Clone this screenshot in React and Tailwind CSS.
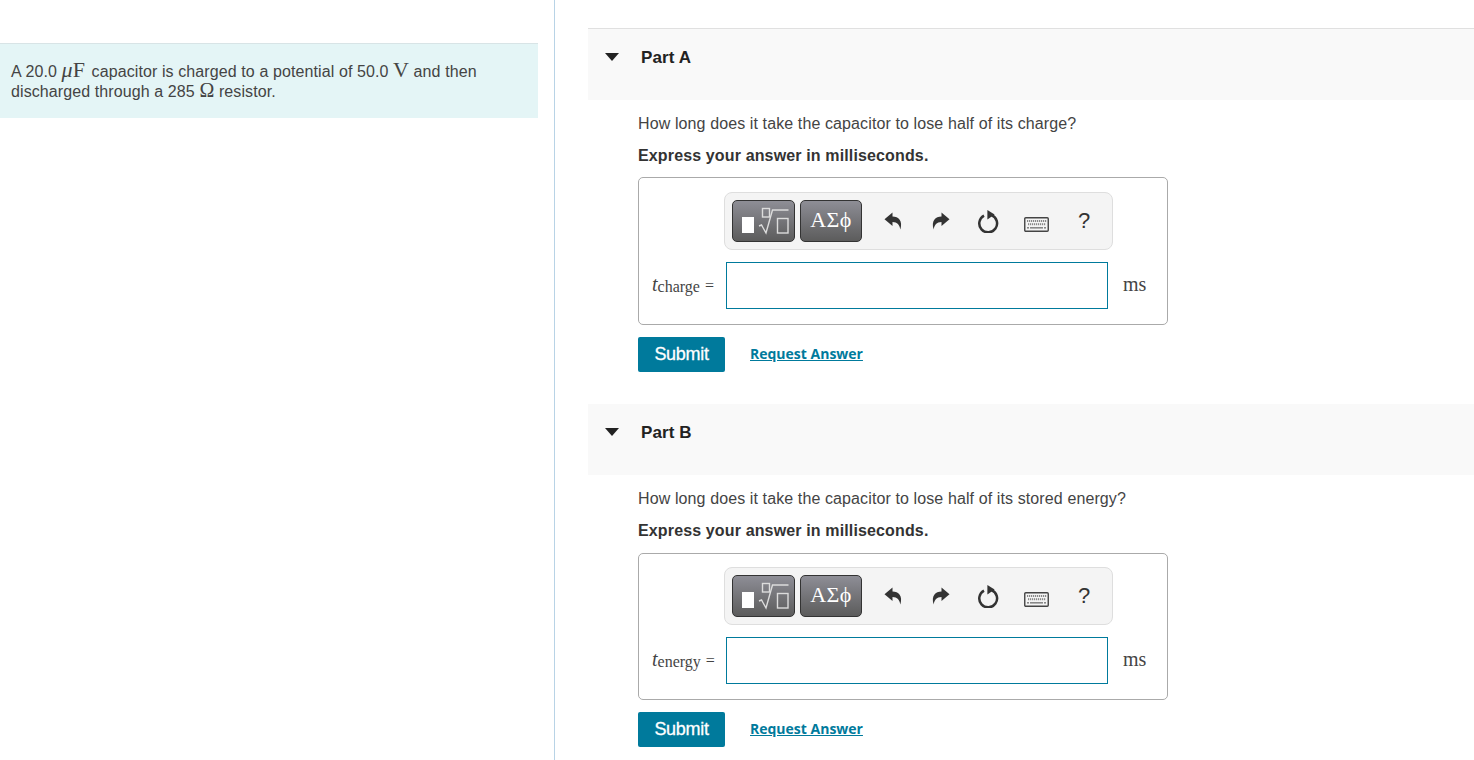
function TemplateIcon() {
  return (
    <svg width="61" height="40" viewBox="0 0 61 40" className="block shrink-0">
      <rect x="9" y="16" width="12" height="16" fill="#fff" />
      <g fill="none" stroke="#dcdcdc" strokeWidth="1.4">
        <rect x="29.5" y="7.5" width="7" height="8.5" />
        <path d="M26 25l2.5-1 4.5 8 6.5-23h16" />
        <rect x="44.5" y="17.5" width="10.5" height="14.5" />
      </g>
    </svg>
  );
}

function Undo() {
  return (
    <svg width="19" height="18" viewBox="0 0 19 18" className="block">
      <path d="M0.5 7.2L8.5 0.4V4.6C14.5 4.6 19 8.6 16.4 17.6C15.6 13 13.4 10 8.5 10V14Z" fill="#333" />
    </svg>
  );
}

function Redo() {
  return (
    <svg width="19" height="18" viewBox="0 0 19 18" className="block">
      <path d="M18.5 7.2L10.5 0.4V4.6C4.5 4.6 0 8.6 2.6 17.6C3.4 13 5.6 10 10.5 10V14Z" fill="#333" />
    </svg>
  );
}

function Reset() {
  return (
    <svg width="22" height="23" viewBox="0 0 22 23" className="block">
      <path d="M14.5 5.2A8.9 8.9 0 1 1 7 5.6" fill="none" stroke="#333" strokeWidth="2.5" />
      <path d="M10.4 0L17.6 4.6L10.4 9.4Z" fill="#333" />
    </svg>
  );
}

function Keyboard() {
  return (
    <svg width="25" height="15" viewBox="0 0 25 15" className="block">
      <rect x="0.75" y="0.75" width="23.5" height="13.5" rx="1" fill="#f4f4f4" stroke="#444" strokeWidth="1.4" />
      <g fill="#888">
        {[3, 5, 7, 9, 11, 13, 15, 17, 19, 21].map((x) => (
          <rect key={x} x={x} y="3" width="1.2" height="2" />
        ))}
        {[4, 6, 8, 10, 12, 14, 16, 18, 20].map((x) => (
          <rect key={x} x={x} y="6.2" width="1.2" height="2" />
        ))}
        <rect x="3" y="10" width="2" height="1.6" />
        <rect x="6" y="10" width="13" height="1.6" />
        <rect x="20" y="10" width="2" height="1.6" />
      </g>
    </svg>
  );
}

function Toolbar() {
  return (
    <div className="ml-[85px] w-[389px] h-[58px] rounded-[8px] border border-[#dedede] bg-[#f4f4f4] flex items-center pl-[7px]">
      <div className="w-[63px] h-[42px] shrink-0 rounded-[5px] border border-[#333] bg-gradient-to-b from-[#8e8e96] to-[#5c5c5c] flex items-center justify-center overflow-hidden">
        <TemplateIcon />
      </div>
      <div className="ml-[5px] w-[62px] h-[42px] shrink-0 rounded-[5px] border border-[#333] bg-gradient-to-b from-[#8e8e96] to-[#5c5c5c] flex items-center justify-center pb-[3px] text-white font-['Liberation_Serif',serif] text-[22px] tracking-[0.4px]">
        ΑΣϕ
      </div>
      <div className="ml-[22px] w-[19px]"><Undo /></div>
      <div className="ml-[28px] w-[19px]"><Redo /></div>
      <div className="ml-[27px] w-[22px]"><Reset /></div>
      <div className="ml-[25px] w-[25px] mt-[6px]"><Keyboard /></div>
      <div className="ml-[29px] text-[22px] leading-none text-[#333]">?</div>
    </div>
  );
}

function Part({ letter, question, sub, first }) {
  return (
    <section>
      <div className={first ? "h-[72px] bg-[#f9f9f9] flex items-start pt-[19px] border-t border-[#e0e0e0]" : "h-[71px] bg-[#f9f9f9] flex items-start pt-[19px]"}>
        <svg width="14" height="8" viewBox="0 0 14 8" className="ml-[17px] mt-[5px]">
          <path d="M0 0H14L7 8Z" fill="#222" />
        </svg>
        <div className="ml-[22px] font-bold text-[17px] leading-[20px] text-[#222] tracking-[0.1px]">Part {letter}</div>
      </div>
      <div className="pl-[50px]">
        <p className="mt-[14px] text-[16px] leading-[20px] text-[#444] tracking-[0.11px]">{question}</p>
        <p className="mt-[12px] text-[16px] leading-[20px] font-bold text-[#333] tracking-[0.14px]">Express your answer in milliseconds.</p>
        <div className={first ? "mt-[11px] w-[530px] h-[148px] rounded-[5px] border border-[#aaa] pt-[14px]" : "mt-[12px] w-[530px] h-[147px] rounded-[5px] border border-[#aaa] pt-[13px]"}>
          <Toolbar />
          <div className="mt-[12px] flex items-center">
            <div className="w-[87px] pl-[13px] mb-[3px] font-['Liberation_Serif',serif] text-[#444] whitespace-nowrap">
              <i className="text-[20px]">t</i>
              <span className="text-[16px] relative top-[1px]">{sub}</span>
              <span className="text-[16px] ml-[5px]">=</span>
            </div>
            <div className="w-[382px] h-[47px] border border-[#007a9c] bg-white"></div>
            <div className="ml-[15px] mb-[3px] font-['Liberation_Serif',serif] text-[20px] text-[#444]">ms</div>
          </div>
        </div>
        <div className="mt-[12px] flex items-center">
          <button className="w-[87px] h-[35px] rounded-[2px] bg-[#007a9c] text-white text-[18px] tracking-[-0.3px] [-webkit-text-stroke:0.3px_#fff]">Submit</button>
          <a className="ml-[25px] mb-[2px] text-[14px] font-bold font-['Open_Sans',sans-serif] text-[#007a9c] underline">Request Answer</a>
        </div>
      </div>
    </section>
  );
}

export default function App() {
  return (
    <div className="flex w-[1474px] h-[760px] overflow-hidden bg-white font-['Liberation_Sans',Arial,sans-serif]">
      <aside className="w-[555px] shrink-0 h-full border-r border-[#b8d3e6] pt-[43px]">
        <div className="w-[538px] h-[75px] bg-[#e4f5f6] border-t border-[#d8e4e6] pl-[11px] pt-[18px] text-[16px] leading-[20px] text-[#444] tracking-[0.1px]">
          <div>
            A 20.0 <span className="font-['Liberation_Serif',serif] text-[22px] leading-[0] mr-[2px]"><i>μ</i>F</span> capacitor is charged to a potential of 50.0 <span className="font-['Liberation_Serif',serif] text-[22px] leading-[0]">V</span> and then
          </div>
          <div>
            discharged through a 285 <span className="font-['Liberation_Serif',serif] text-[20px] leading-[0]">Ω</span> resistor.
          </div>
        </div>
      </aside>
      <main className="flex-1 pl-[33px] pt-[28px]">
        <Part letter="A" first question="How long does it take the capacitor to lose half of its charge?" sub="charge" />
        <div className="h-[32px]"></div>
        <Part letter="B" question="How long does it take the capacitor to lose half of its stored energy?" sub="energy" />
      </main>
    </div>
  );
}
